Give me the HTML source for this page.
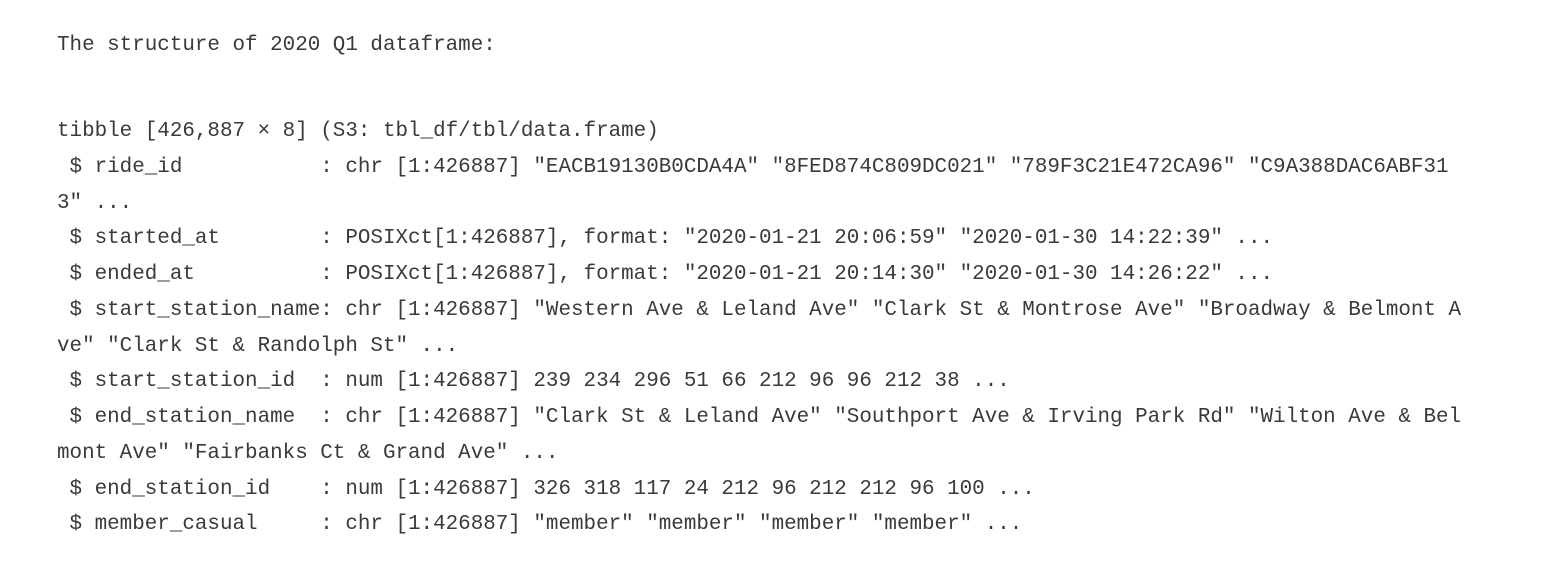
<!DOCTYPE html>
<html><head><meta charset="utf-8"><style>
body{margin:0;width:1552px;height:572px;background:#fff;overflow:hidden}
pre{position:absolute;left:57px;margin:0;font-family:"Liberation Mono",monospace;font-size:20.9px;color:#3a3a3a;white-space:pre;line-height:35.75px}
</style></head><body>
<pre style="top:28px">The structure of 2020 Q1 dataframe:</pre>
<pre style="top:114px">tibble [426,887 × 8] (S3: tbl_df/tbl/data.frame)
 $ ride_id           : chr [1:426887] "EACB19130B0CDA4A" "8FED874C809DC021" "789F3C21E472CA96" "C9A388DAC6ABF31
3" ...
 $ started_at        : POSIXct[1:426887], format: "2020-01-21 20:06:59" "2020-01-30 14:22:39" ...
 $ ended_at          : POSIXct[1:426887], format: "2020-01-21 20:14:30" "2020-01-30 14:26:22" ...
 $ start_station_name: chr [1:426887] "Western Ave &amp; Leland Ave" "Clark St &amp; Montrose Ave" "Broadway &amp; Belmont A
ve" "Clark St &amp; Randolph St" ...
 $ start_station_id  : num [1:426887] 239 234 296 51 66 212 96 96 212 38 ...
 $ end_station_name  : chr [1:426887] "Clark St &amp; Leland Ave" "Southport Ave &amp; Irving Park Rd" "Wilton Ave &amp; Bel
mont Ave" "Fairbanks Ct &amp; Grand Ave" ...
 $ end_station_id    : num [1:426887] 326 318 117 24 212 96 212 212 96 100 ...
 $ member_casual     : chr [1:426887] "member" "member" "member" "member" ...</pre>
</body></html>
